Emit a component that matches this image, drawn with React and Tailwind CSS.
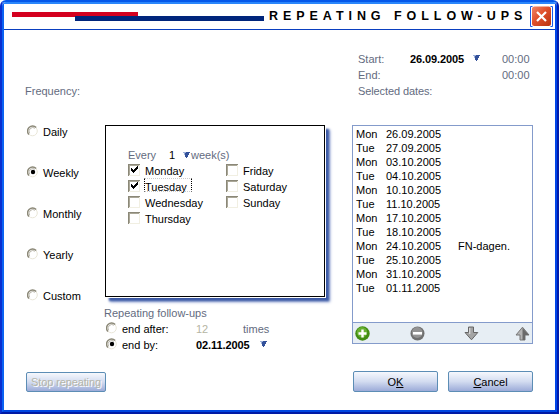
import React from "react";

function Radio({ checked }) {
  return (
    <svg width="11" height="12" viewBox="0 0 11 12" className="mt-px shrink-0">
      <circle cx="5.5" cy="6" r="4.8" fill="#fff" stroke="#e9e6d8" strokeWidth="1" />
      <path d="M2 9.6A5 5 0 0 1 9.2 2.5" fill="none" stroke="#8b8878" strokeWidth="1.4" />
      <path d="M2.6 8.3A3.8 3.8 0 0 1 8 3.2" fill="none" stroke="#a5a192" strokeWidth="0.8" />
      {checked && <circle cx="6" cy="6" r="2.2" fill="#000" />}
    </svg>
  );
}

function Check({ label, checked, focused }) {
  return (
    <div className="flex h-4 w-[98px] items-start">
      <svg width="12" height="12" viewBox="0 0 12 12" className="mt-[1px] shrink-0" shapeRendering="crispEdges">
        <rect width="12" height="12" fill="#f1efe2" />
        <path d="M0 0H12V1H1V12H0Z" fill="#8b8878" />
        <path d="M1 1H11V2H2V11H1Z" fill="#aaa797" />
        <rect x="2" y="2" width="9" height="9" fill="#fff" />
        {checked && (
          <path d="M3 4h1v1h1v1h1v-1h1v-1h1v-1h1v-1h1v3h-1v1h-1v1h-1v1h-1v1h-1v-1h-1v-1h-1z" fill="#000" />
        )}
      </svg>
      <span
        className={
          focused
            ? "-mt-px ml-[4px] h-[14px] w-[48px] border border-dotted border-x-black border-y-[#ccc] leading-[16px]"
            : "ml-[5px]"
        }
      >
        {label}
      </span>
    </div>
  );
}

function Caret() {
  return (
    <svg width="7" height="6" viewBox="0 0 7 6" className="-ml-px shrink-0" shapeRendering="crispEdges">
      <path d="M0 0H7V1H6V3H5V5H4V6H3V5H2V3H1V1H0Z" fill="#33519a" />
      <path d="M0 0H3V1H2V3H1V1H0Z" fill="#9db1da" />
    </svg>
  );
}

const frequencies = ["Daily", "Weekly", "Monthly", "Yearly", "Custom"];

const dates = [
  ["Mon", "26.09.2005"],
  ["Tue", "27.09.2005"],
  ["Mon", "03.10.2005"],
  ["Tue", "04.10.2005"],
  ["Mon", "10.10.2005"],
  ["Tue", "11.10.2005"],
  ["Mon", "17.10.2005"],
  ["Tue", "18.10.2005"],
  ["Mon", "24.10.2005", "FN-dagen."],
  ["Tue", "25.10.2005"],
  ["Mon", "31.10.2005"],
  ["Tue", "01.11.2005"],
];

const button =
  "flex items-center justify-center rounded-[2px] border border-[#5c8db5] bg-linear-to-b from-[#f6f8fd] via-[#d3dcf0] to-[#9cabd8]";

function Header() {
  return (
    <header className="flex h-[26px] shrink-0 border-b border-[#0a3fc0] bg-white">
      <div className="ml-2 w-[252px] pt-2">
        <div className="h-[5px] w-[126px] bg-[#d4001f]" />
        <div className="relative -mt-px ml-[63px] h-[5px] w-[189px] bg-[#00257c]" />
      </div>
      <h1 className="ml-[5px] w-[261px] whitespace-nowrap text-[12.5px] leading-[25px] font-bold tracking-[4.95px] text-black">
        REPEATING FOLLOW-UPS
      </h1>
      <svg width="23" height="21" viewBox="0 0 23 21" className="mt-[2px]">
        <rect width="23" height="21" fill="#fff" />
        <path d="M2.5 0.5H0.5V20.5H2.5M20.5 0.5H22.5V20.5H20.5" fill="none" stroke="#1b5be8" />
        <rect x="2" y="0.5" width="19" height="19.5" rx="2.5" fill="url(#closeFill)" />
        <path d="M7 6L16 15M16 6L7 15" stroke="#fff" strokeWidth="2.2" />
        <defs>
          <linearGradient id="closeFill" x1="0" y1="0" x2="1" y2="1">
            <stop offset="0" stopColor="#f0866a" />
            <stop offset="0.45" stopColor="#e0502c" />
            <stop offset="1" stopColor="#b93210" />
          </linearGradient>
        </defs>
      </svg>
    </header>
  );
}

function Toolbar() {
  return (
    <div className="flex h-[21px] items-center justify-between border-t border-[#849bcb] bg-[#e7eef4] pr-[2px] pl-[2px]">
      <svg width="15" height="15" viewBox="0 0 15 15">
        <circle cx="7.5" cy="7.5" r="7.2" fill="#418c12" />
        <circle cx="7" cy="6.3" r="5.2" fill="#67af30" />
        <path d="M7.5 3.5V11.5M3.5 7.5H11.5" stroke="#fff" strokeWidth="2.4" />
      </svg>
      <svg width="15" height="15" viewBox="0 0 15 15">
        <circle cx="7.5" cy="7.5" r="7" fill="#707070" />
        <circle cx="7.2" cy="6.5" r="5.4" fill="#939393" />
        <path d="M3 7.3H12" stroke="#fff" strokeWidth="2.6" />
      </svg>
      <svg width="15" height="15" viewBox="0 0 15 15" className="-mr-[4px]">
        <path d="M4.5 1H9.5V6.5H13.8L7.5 13.8L1 6.5H4.5Z" fill="#a4a4a4" stroke="#666" strokeWidth="1" />
        <path d="M5.7 2V8" stroke="#ddd" strokeWidth="1.2" />
      </svg>
      <svg width="15" height="15" viewBox="0 0 15 15">
        <path d="M5 14V9H1L7.5 1.2L14 9H10V14Z" fill="#b4b4b4" stroke="#777" strokeWidth="1" />
        <path d="M7.5 2L14 9H10V14H7.5Z" fill="#6a6a6a" />
      </svg>
    </div>
  );
}

export default function App() {
  return (
    <div className="h-[414px] w-[559px] overflow-hidden rounded-t-[6px] border-2 border-t-[#0558ea] border-r-[#001cab] border-b-[#001aa5] border-l-[#0a2fd0] bg-white font-['Liberation_Sans',Arial,sans-serif] text-[11px] leading-4 text-black">
      <div className="flex h-[410px] w-[555px] flex-col rounded-t-[3px] border-2 border-t-[#2a86fb] border-r-[#0046e8] border-b-[#0046e0] border-l-[#0b62f2] bg-white outline-2 outline-[#0a55e8]/30">
        <Header />
        <main className="flex flex-1 whitespace-nowrap">
          <section className="w-[100px] pt-[53px] pl-[21px]">
            <div className="text-[#636b80]">Frequency:</div>
            <div className="mt-[25px] flex flex-col gap-[25px] pl-[2px]">
              {frequencies.map((f) => (
                <div key={f} className="flex h-4 items-start gap-[5px]">
                  <Radio checked={f === "Weekly"} />
                  <span>{f}</span>
                </div>
              ))}
            </div>
            <button
              className={`${button} mt-[68px] ml-px h-5 w-20 tracking-[-0.12px] text-[#b5b5a8] [text-shadow:1px_1px_0_#fff]`}
            >
              Stop repeating
            </button>
          </section>

          <section className="w-[248px] pt-[95px] pl-px">
            <div className="h-[172px] w-[220px] border border-black bg-white pt-[21px] pl-[22px] shadow-[0_0_0_1px_#fff,4px_4px_2px_0_#3d5aa5,5px_5px_3px_0_#8c9fd0]">
              <div className="flex text-[#636b80]">
                <span className="w-[41px]">Every</span>
                <span className="w-[15px] text-black">1</span>
                <span className="w-[7px] pt-[5px]">
                  <Caret />
                </span>
                <span>week(s)</span>
              </div>
              <div className="flex">
                <div>
                  <Check label="Monday" checked />
                  <Check label="Tuesday" checked focused />
                  <Check label="Wednesday" />
                  <Check label="Thursday" />
                </div>
                <div>
                  <Check label="Friday" />
                  <Check label="Saturday" />
                  <Check label="Sunday" />
                </div>
              </div>
            </div>
            <div className="mt-2 -ml-px text-[#636b80]">Repeating follow-ups</div>
            <div className="ml-px flex">
              <Radio />
              <span className="ml-[5px] w-[74px]">end after:</span>
              <span className="w-[47px] text-[#b5b5a3]">12</span>
              <span className="text-[#636b80]">times</span>
            </div>
            <div className="ml-px flex">
              <Radio checked />
              <span className="ml-[5px] w-[74px]">end by:</span>
              <span className="w-[65px] font-bold tracking-[-0.1px]">02.11.2005</span>
              <span className="pt-1">
                <Caret />
              </span>
            </div>
          </section>

          <section className="w-[181px] pt-[21px]">
            <div className="pl-[6px] text-[#636b80]">
              <div className="flex">
                <span className="w-[52px]">Start:</span>
                <span className="w-[64px] font-bold tracking-[-0.1px] text-black">26.09.2005</span>
                <span className="w-[28px] pt-1">
                  <Caret />
                </span>
                <span>00:00</span>
              </div>
              <div className="flex">
                <span className="w-[144px]">End:</span>
                <span>00:00</span>
              </div>
              <div className="tracking-[-0.1px]">Selected dates:</div>
            </div>
            <div className="mt-[26px] flex h-[219px] w-[181px] flex-col justify-between border border-[#849bcb]">
              <div className="pt-px pl-[3px] leading-[14px]">
                {dates.map(([day, date, note]) => (
                  <div key={date} className="flex h-[14px]">
                    <span className="w-[30px]">{day}</span>
                    <span className="w-[72px]">{date}</span>
                    <span>{note}</span>
                  </div>
                ))}
              </div>
              <Toolbar />
            </div>
            <div className="mt-[27px] flex justify-between pl-px">
              <button className={`${button} h-[21px] w-[85px]`}>
                <span>
                  O<u>K</u>
                </span>
              </button>
              <button className={`${button} h-[21px] w-[85px]`}>
                <span>
                  <u>C</u>ancel
                </span>
              </button>
            </div>
          </section>
        </main>
      </div>
    </div>
  );
}
